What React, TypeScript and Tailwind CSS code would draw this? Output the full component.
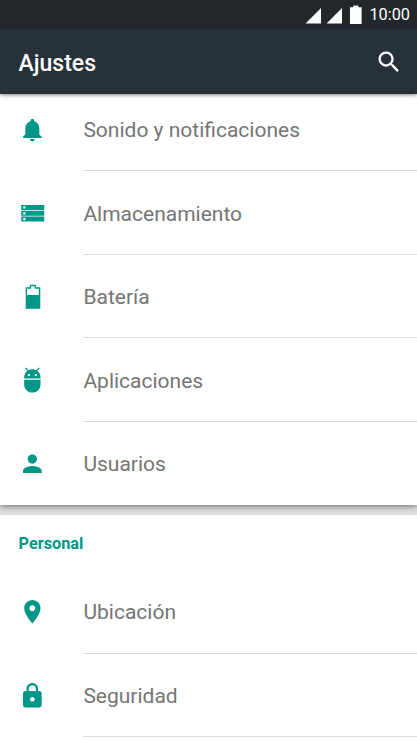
import type { ReactNode } from "react";

type Item = {
  label: string;
  icon: ReactNode;
};

const deviceItems: Item[] = [
  {
    label: "Sonido y notificaciones",
    icon: (
      <path d="M12 22c1.1 0 2-.9 2-2h-4c0 1.1.9 2 2 2zm6-6v-5c0-3.07-1.64-5.64-4.5-6.32V4c0-.83-.67-1.5-1.5-1.5s-1.5.67-1.5 1.5v.68C7.63 5.36 6 7.92 6 11v5l-2 2v1h16v-1l-2-2z" />
    )
  },
  {
    label: "Almacenamiento",
    icon: (
      <path
        fillRule="evenodd"
        d="M2.5 5.3h19.7v4.3H2.5zM2.5 10.3h19.7v4.3H2.5zM2.5 15.3h19.7v4.3H2.5zM4.2 6.500v1.900h1.900V6.500zM4.200 11.500v1.900h1.900v-1.900zM4.200 16.500v1.900h1.900v-1.900z"
      />
    )
  },
  {
    label: "Batería",
    icon: (
      <path
        fillRule="evenodd"
        d="M9.8 1.7h5.2v2.2h3.8v18.4H6.3V3.900h3.500zM10.900 2.900v2.200H7.500v5.300h10V5.100h-3.600V2.900z"
      />
    )
  },
  {
    label: "Aplicaciones",
    icon: (
      <path d="M5 16c0 3.87 3.13 7 7 7s7-3.13 7-7v-4H5v4zM16.12 4.37l2.1-2.1-.82-.83-2.3 2.31C14.16 3.28 13.12 3 12 3s-2.14.28-3.09.75L6.6 1.44l-.82.83 2.1 2.1C6.14 5.64 5 7.68 5 10v1h14v-1c0-2.32-1.14-4.36-2.88-5.63zM9 9c-.55 0-1-.45-1-1s.45-1 1-1 1 .45 1 1-.45 1-1 1zm6 0c-.55 0-1-.45-1-1s.45-1 1-1 1 .45 1 1-.45 1-1 1z" />
    )
  },
  {
    label: "Usuarios",
    icon: (
      <path d="M12 12c2.21 0 4-1.79 4-4s-1.79-4-4-4-4 1.79-4 4 1.79 4 4 4zm0 2c-2.67 0-8 1.34-8 4v2h16v-2c0-2.66-5.33-4-8-4z" />
    )
  }
];

const personalItems: Item[] = [
  {
    label: "Ubicación",
    icon: (
      <path d="M12 2C8.13 2 5 5.13 5 9c0 5.25 7 13 7 13s7-7.75 7-13c0-3.87-3.13-7-7-7zm0 9.5c-1.38 0-2.5-1.12-2.5-2.5s1.12-2.5 2.5-2.5 2.5 1.12 2.5 2.5-1.12 2.5-2.5 2.5z" />
    )
  },
  {
    label: "Seguridad",
    icon: (
      <path d="M18 8h-1V6c0-2.76-2.24-5-5-5S7 3.24 7 6v2H6c-1.1 0-2 .9-2 2v10c0 1.1.9 2 2 2h12c1.1 0 2-.9 2-2V10c0-1.1-.9-2-2-2zm-6 9c-1.1 0-2-.9-2-2s.9-2 2-2 2 .9 2 2-.9 2-2 2zm3.1-9H8.9V6c0-1.71 1.39-3.1 3.1-3.1 1.71 0 3.1 1.39 3.1 3.1v2z" />
    )
  }
];

function SettingsRow({ item, divider }: { item: Item; divider: boolean }) {
  return (
    <li className="flex h-[83.5px] shrink-0 items-stretch pl-[18.4px]">
      <svg viewBox="-0.3 0 24 24" className="mr-[37px] w-7 shrink-0 fill-[#009688]">
        {item.icon}
      </svg>
      <div
        className={
          divider
            ? "flex flex-1 items-center border-b border-[#dedede]"
            : "flex flex-1 items-center border-b border-transparent"
        }
      >
        <span className="pt-[2.4px] text-[21px] leading-6 whitespace-nowrap text-[#757575]">{item.label}</span>
      </div>
    </li>
  );
}

function StatusBar() {
  return (
    <div className="flex h-[29px] items-center justify-end bg-[#21272a] pr-[7px] text-white">
      <svg viewBox="0 0 58 20" className="mr-[6px] h-5 w-[58px] fill-white">
        <path d="M16 3v15.5H.5zM37 3v15.5H21.5z" />
        <path d="M48.3 .5h5v1.8h3.3v16.7H45V2.3h3.3z" />
      </svg>
      <span className="pt-px text-[16.3px] leading-5">10:00</span>
    </div>
  );
}

export default function App() {
  return (
    <main className="flex h-[742px] w-[417px] flex-col overflow-hidden bg-[#dedede] font-['Roboto',sans-serif]">
      <header className="relative z-10 shrink-0 shadow-[0_1px_4px_rgba(0,0,0,0.5)]">
        <StatusBar />
        <div className="flex h-[65px] items-center justify-between bg-[#263238] pr-[14px] pl-[18.5px]">
          <h1 className="pt-[5px] text-[23px] leading-7 font-medium text-white">Ajustes</h1>
          <svg viewBox="0 0 24 24" className="h-7 w-7 fill-white">
            <path d="M15.5 14h-.79l-.28-.27C15.41 12.59 16 11.11 16 9.5 16 5.91 13.09 3 9.5 3S3 5.91 3 9.5 5.91 16 9.5 16c1.61 0 3.09-.59 4.23-1.57l.27.28v.79l5 4.99L20.49 19l-4.99-5zm-6 0C7.01 14 5 11.99 5 9.5S7.01 5 9.5 5 14 7.01 14 9.5 11.99 14 9.5 14z" />
          </svg>
        </div>
      </header>

      <section className="h-[411px] shrink-0 bg-white shadow-[0_1px_6px_rgba(0,0,0,0.55)]">
        <ul className="-mt-[6.4px]">
          {deviceItems.map((item, index) => (
            <SettingsRow key={item.label} item={item} divider={index < deviceItems.length - 1} />
          ))}
        </ul>
      </section>

      <section className="mt-[10px] flex-1 bg-white">
        <h2 className="flex h-[55px] items-center pt-[2px] pl-[18.5px] text-[16.3px] leading-5 font-bold text-[#009688]">
          Personal
        </h2>
        <ul>
          {personalItems.map((item) => (
            <SettingsRow key={item.label} item={item} divider />
          ))}
        </ul>
      </section>
    </main>
  );
}
